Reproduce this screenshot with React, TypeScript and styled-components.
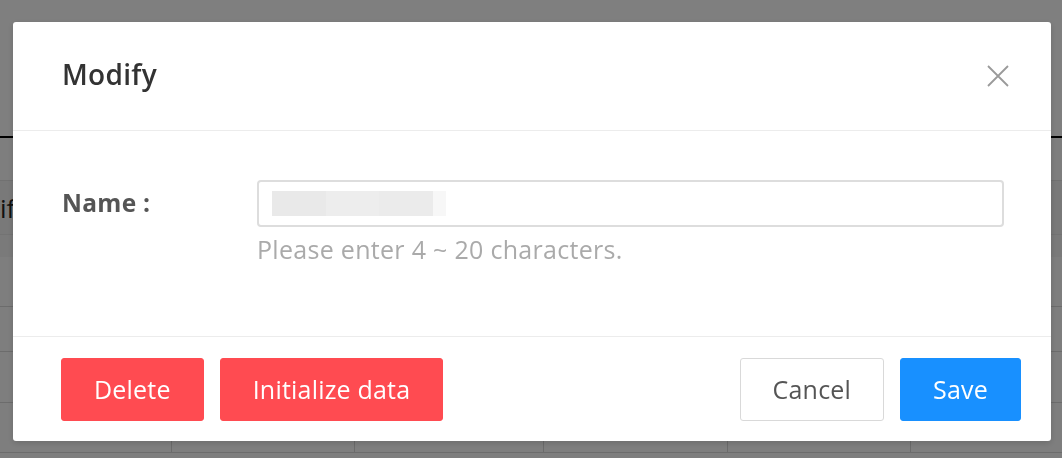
import React from "react";
import styled, { createGlobalStyle } from "styled-components";

const GlobalStyle = createGlobalStyle`
  html, body {
    margin: 0;
    padding: 0;
    width: 1062px;
    height: 458px;
    overflow: hidden;
    background: #ffffff;
    font-family: "Open Sans", "Noto Sans", sans-serif;
  }
  * {
    box-sizing: border-box;
  }
`;

const columns = [216, 183, 189, 184, 183, 183];

export default function App() {
  return (
    <>
      <GlobalStyle />
      <Page>
        <PageHeader />
        <TableWrap>
          <HeaderRow>
            {columns.map((w, i) => (
              <Cell key={i} style={{ width: w }}>
                {i === 0 && <HeaderText>Modified</HeaderText>}
              </Cell>
            ))}
          </HeaderRow>
          <FilterRow />
          {[50, 45, 51, 50].map((h, r) => (
            <BodyRow key={r} $height={h}>
              {columns.map((w, i) => (
                <Cell key={i} style={{ width: w }} />
              ))}
            </BodyRow>
          ))}
        </TableWrap>
      </Page>

      <Overlay>
        <Modal>
          <ModalHeader>
            <Title>Modify</Title>
            <CloseButton aria-label="Close">
              <svg width="22" height="22" viewBox="0 0 22 22">
                <path
                  d="M1 1 L21 21 M21 1 L1 21"
                  stroke="#9a9a9a"
                  strokeWidth="1.8"
                  fill="none"
                />
              </svg>
            </CloseButton>
          </ModalHeader>

          <ModalBody>
            <FieldRow>
              <Label>Name :</Label>
              <FieldCol>
                <InputBox>
                  <Redacted>
                    <Blur $shade="#e9e9e9" $width={54} />
                    <Blur $shade="#ededed" $width={53} />
                    <Blur $shade="#ebebeb" $width={54} />
                    <Blur $shade="#f7f7f7" $width={13} />
                  </Redacted>
                </InputBox>
                <Help>Please enter 4 ~ 20 characters.</Help>
              </FieldCol>
            </FieldRow>
          </ModalBody>

          <ModalFooter>
            <ButtonGroup>
              <Button $variant="danger">Delete</Button>
              <Button $variant="danger">Initialize data</Button>
            </ButtonGroup>
            <ButtonGroup>
              <Button $variant="default">Cancel</Button>
              <Button $variant="primary">Save</Button>
            </ButtonGroup>
          </ModalFooter>
        </Modal>
      </Overlay>
    </>
  );
}

const Page = styled.div`
  width: 1062px;
  height: 458px;
  background: #fdfdfd;
`;

const PageHeader = styled.div`
  height: 138px;
  background: #ffffff;
  border-bottom: 2px solid #000000;
`;

const TableWrap = styled.div`
  margin-top: 42px;
  margin-left: -44px;
  width: 1200px;
`;

const HeaderRow = styled.div`
  display: flex;
  height: 55px;
  background: #f3f3f3;
  border-top: 1px solid #e2e2e2;
  border-bottom: 1px solid #e6e6e6;
`;

const HeaderText = styled.span`
  margin-left: -25px;
  white-space: nowrap;
`;

const FilterRow = styled.div`
  height: 22px;
  background: #f4f4f4;
`;

const BodyRow = styled.div<{ $height: number }>`
  display: flex;
  height: ${(p) => p.$height}px;
  border-bottom: 1px solid #d8d8d8;
`;

const Cell = styled.div`
  flex: none;
  height: 100%;
  display: flex;
  align-items: center;
  padding-left: 14px;
  border-right: 1px solid #d6d6d6;
  font-size: 26px;
  color: #222;
`;

const Overlay = styled.div`
  position: fixed;
  inset: 0;
  background: rgba(0, 0, 0, 0.5);
  display: flex;
  align-items: flex-start;
  padding: 22px 11px 0 13px;
`;

const Modal = styled.div`
  width: 1038px;
  height: 419px;
  background: #ffffff;
  border-radius: 3px;
  box-shadow: 0 2px 6px rgba(0, 0, 0, 0.15);
  display: flex;
  flex-direction: column;
`;

const ModalHeader = styled.div`
  height: 109px;
  flex: none;
  display: flex;
  align-items: center;
  justify-content: space-between;
  padding: 0 42px 4px 49px;
  border-bottom: 1px solid #ececec;
`;

const Title = styled.h2`
  margin: 0;
  font-size: 28px;
  font-weight: 600;
  color: #333333;
  letter-spacing: 0.3px;
`;

const CloseButton = styled.button`
  border: none;
  background: none;
  padding: 0;
  width: 22px;
  height: 22px;
  display: flex;
  margin-top: 3px;
`;

const ModalBody = styled.div`
  flex: 1;
  padding: 49px 47px 0 49px;
`;

const FieldRow = styled.div`
  display: flex;
  align-items: flex-start;
`;

const Label = styled.div`
  width: 195px;
  flex: none;
  height: 47px;
  display: flex;
  align-items: center;
  font-size: 24.5px;
  font-weight: 700;
  color: #555555;
  padding-bottom: 2px;
  letter-spacing: 0.3px;
`;

const FieldCol = styled.div`
  flex: 1;
  display: flex;
  flex-direction: column;
`;

const InputBox = styled.div`
  height: 47px;
  border: 2px solid #dddddd;
  border-radius: 4px;
  display: flex;
  align-items: center;
  padding-left: 13px;
`;

const Redacted = styled.div`
  display: flex;
  height: 25px;
`;

const Blur = styled.span<{ $shade: string; $width: number }>`
  display: block;
  width: ${(p) => p.$width}px;
  height: 100%;
  background: ${(p) => p.$shade};
`;

const Help = styled.div`
  margin-top: 3px;
  font-size: 25px;
  line-height: 38px;
  letter-spacing: 0.3px;
  color: #aaaaaa;
`;

const ModalFooter = styled.div`
  height: 105px;
  flex: none;
  border-top: 1px solid #ececec;
  display: flex;
  align-items: flex-start;
  justify-content: space-between;
  padding: 21px 30px 0 48px;
`;

const ButtonGroup = styled.div`
  display: flex;
  gap: 16px;
`;

const variants = {
  danger: { bg: "#ff4b51", border: "#ff4b51", color: "#ffffff" },
  primary: { bg: "#1890ff", border: "#1890ff", color: "#ffffff" },
  default: { bg: "#ffffff", border: "#d9d9d9", color: "#555555" },
};

const Button = styled.button<{ $variant: keyof typeof variants }>`
  height: 63px;
  padding: 0 32px 2px;
  border-radius: 3px;
  border: 1.5px solid ${(p) => variants[p.$variant].border};
  background: ${(p) => variants[p.$variant].bg};
  color: ${(p) => variants[p.$variant].color};
  font-family: "Open Sans", "Noto Sans", sans-serif;
  font-size: 25px;
  font-weight: 400;
  letter-spacing: 0.2px;
  cursor: pointer;
`;
